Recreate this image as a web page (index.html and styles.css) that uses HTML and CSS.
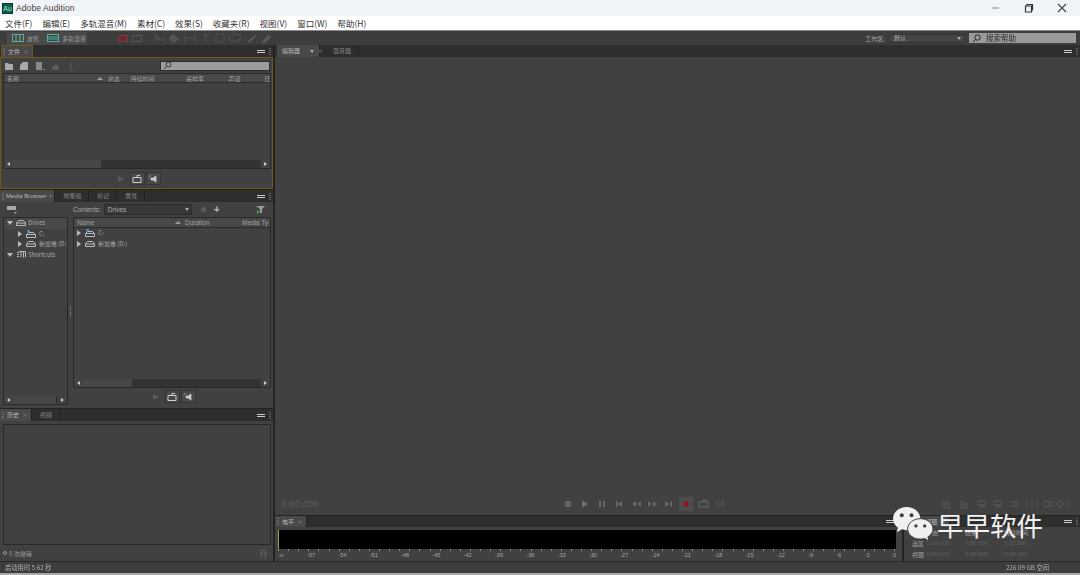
FILE: index.html
```html
<!DOCTYPE html>
<html lang="zh">
<head>
<meta charset="utf-8">
<title>Adobe Audition</title>
<link rel="stylesheet" href="styles.css">
</head>
<body>
<div class="app">
  <header class="titlebar">
    <div class="logo">Au</div>
    <div class="app-name">Adobe Audition</div>
    <div class="winctl">
      <svg width="12" height="12" viewBox="0 0 12 12"><path d="M2 6h7" stroke="#888" fill="none"/></svg>
      <svg width="12" height="12" viewBox="0 0 12 12"><path d="M2.5 4h6v6h-6zM4 4V2.500h5.500V8H8.500" stroke="#333" stroke-width="1.200" fill="none"/></svg>
      <svg width="12" height="12" viewBox="0 0 12 12"><path d="M2 2l8 8M10 2l-8 8" stroke="#444" stroke-width="1.100" fill="none"/></svg>
    </div>
  </header>
  <nav class="menubar">
    <span>文件(F)</span><span>编辑(E)</span><span>多轨混音(M)</span><span>素材(C)</span><span>效果(S)</span><span>收藏夹(R)</span><span>视图(V)</span><span>窗口(W)</span><span>帮助(H)</span>
  </nav>
  <div class="toolbar">
    <div class="mode"><svg width="12" height="8" viewBox="0 0 12 8"><rect x=".5" y=".5" width="11" height="7" fill="none" stroke="#5fae9b"/><path d="M4 1v6M8 1v6" stroke="#5fae9b"/></svg><span>波形</span></div>
    <div class="mode mode-wide"><svg width="12" height="8" viewBox="0 0 12 8"><rect x=".5" y=".5" width="11" height="7" fill="#2c4a42" stroke="#5fae9b"/><path d="M1 3h10M1 5h10" stroke="#5fae9b"/></svg><span>多轨混音</span></div>
    <div class="tools">
      <i class="tool tool-red"></i><i class="tool tool-box"></i>
      <svg class="tool-set" width="120" height="12" viewBox="0 0 120 12" fill="none" stroke="#555">
        <path d="M1 2v7l2-2 3 0zM7 8h3M8.500 6v4"/>
        <path d="M15 6l4-4 5 5-4 4zM24 10h2" fill="#555"/>
        <path d="M31 3v6M41 3v6M32 6h8"/>
        <path d="M49 3h6M52 3v6"/>
        <rect x="62" y="2" width="8" height="8" stroke-dasharray="2 1"/>
        <ellipse cx="81" cy="6" rx="6" ry="3.500" transform="rotate(-15 81 6)"/>
        <path d="M94 10l7-7 1 1-7 7zM108 10l6-7 3 2-6 6z" fill="#555"/>
      </svg>
    </div>
    <div class="workspace">
      <span class="ws-label">工作区:</span>
      <div class="ws-select"><span>默认</span><b class="arrow-d"></b></div>
      <div class="help"><svg width="9" height="9" viewBox="0 0 9 9"><circle cx="5.500" cy="3.500" r="2.700" fill="none" stroke="#222"/><path d="M3.500 5.500L1 8" stroke="#222"/></svg><span>搜索帮助</span></div>
    </div>
  </div>

  <main class="workarea">
    <div class="left">
      <section class="group g-files">
        <div class="tabs">
          <div class="tab tab-active tab-focus"><span class="grip"></span>文件<span class="x">×</span></div>
          <div class="tabs-end"><span class="menu-ic"></span><span class="grip"></span></div>
        </div>
        <div class="panel panel-focus">
          <div class="file-tools">
            <svg width="70" height="10" viewBox="0 0 70 10"><path d="M1 2h3l1 1h4v6H1z" fill="#aaa"/><path d="M16 4l3-3h5v8h-8z" fill="#aaa"/><path d="M32 1h6v8h-6zM39 8h2v1h-2z" fill="#8a8a8a"/><path d="M48 6l4-3 3 3v3h-7z" fill="#5c5c5c"/><path d="M67 2v5M65 9h4" stroke="#5c5c5c"/></svg>
            <div class="search"><svg width="9" height="9" viewBox="0 0 9 9"><circle cx="5.500" cy="3.500" r="2.500" fill="none" stroke="#333"/><path d="M3.500 5.500L1 8" stroke="#333"/></svg></div>
          </div>
          <div class="list list-files">
            <div class="cols">
              <span class="c-name">名称</span><span class="sort"></span><span class="c-s">状态</span><span class="c-d">持续时间</span><span class="c-r">采样率</span><span class="c-c">声道</span><span class="c-e">日</span>
            </div>
            <div class="list-body"></div>
            <div class="hscroll"><b class="sl"></b><i class="thumb thumb-files"></i><b class="sr"></b></div>
          </div>
          <div class="transport-mini">
            <span class="mini mini-off"><b class="play"></b></span>
            <span class="mini"><svg width="10" height="8" viewBox="0 0 10 8"><path d="M1 2.500h8v5H1zM5 2.500V.5h3" fill="none" stroke="#ccc"/></svg></span>
            <span class="mini"><svg width="10" height="8" viewBox="0 0 10 8"><path d="M0 2v1M2 0v2M3 3h2l3-2v6L5 5H3z" stroke="#ccc" fill="#ccc" stroke-width=".7"/></svg></span>
          </div>
        </div>
      </section>

      <section class="group g-media">
        <div class="tabs">
          <div class="tab tab-active tab-media"><span class="grip"></span>Media Browser<span class="x">×</span></div>
          <div class="tab">效果组</div><div class="tab">标记</div><div class="tab">属性</div>
          <div class="tabs-end"><span class="menu-ic"></span><span class="grip"></span></div>
        </div>
        <div class="panel panel-media">
          <div class="media-top">
            <svg class="drives-menu" width="12" height="9" viewBox="0 0 12 9"><path d="M1 1h9v4H1zM8 7h3l-1.500 2z" fill="#aaa"/></svg>
            <span class="contents-label">Contents:</span>
            <div class="contents-sel"><span>Drives</span><b class="arrow-d"></b></div>
            <span class="dim-dot"></span>
            <span class="plus">+</span>
            <svg class="filter" width="10" height="9" viewBox="0 0 10 9"><path d="M0 1h9L6 4v4H4V4z" fill="#999"/><circle cx="2" cy="7" r="1.500" fill="#3a9a3a"/></svg>
          </div>
          <div class="media-split">
            <div class="tree-wrap">
              <div class="tree">
                <div class="trow trow-head"><b class="tw-d"></b><svg class="dr" width="10" height="6" viewBox="0 0 10 6"><path d="M2.500.5h5l2 2.500v2.500H.5V3zM1 3h8" fill="none" stroke="#bbb"/></svg>Drives</div>
                <div class="trow tin"><b class="tw-r"></b><svg class="dr" width="10" height="8" viewBox="0 0 10 8"><path d="M1 0h3v2H1z" fill="#3c8fc0"/><path d="M2.500 2.500h5l2 2v3H.5v-3zM1 4.500h8" fill="none" stroke="#bbb"/></svg>C:</div>
                <div class="trow tin"><b class="tw-r"></b><svg class="dr" width="10" height="6" viewBox="0 0 10 6"><path d="M2.500.5h5l2 2.500v2.500H.5V3zM1 3h8" fill="none" stroke="#bbb"/></svg>新加卷 (D:)</div>
                <div class="trow"><b class="tw-d"></b><svg class="dr" width="10" height="7" viewBox="0 0 10 7"><path d="M3 .5h6.500v6M5 .5v6M7.500.5v6M1 1.500h2M1 3.500h2M1 5.500h2" fill="none" stroke="#bbb"/></svg>Shortcuts</div>
              </div>
              <div class="hscroll"><b class="sl"></b><i class="thumb thumb-tree"></i><b class="sr"></b></div>
            </div>
            <div class="divider"><i></i></div>
            <div class="media-main">
              <div class="list list-media">
                <div class="cols">
                  <span class="m-name">Name</span><span class="sort"></span><span class="m-d">Duration</span><span class="m-t">Media Ty</span>
                </div>
                <div class="list-body">
                  <div class="trow"><b class="tw-r"></b><svg class="dr" width="10" height="8" viewBox="0 0 10 8"><path d="M1 0h3v2H1z" fill="#3c8fc0"/><path d="M2.500 2.500h5l2 2v3H.5v-3zM1 4.500h8" fill="none" stroke="#bbb"/></svg>C:</div>
                  <div class="trow"><b class="tw-r"></b><svg class="dr" width="10" height="6" viewBox="0 0 10 6"><path d="M2.500.5h5l2 2.500v2.500H.5V3zM1 3h8" fill="none" stroke="#bbb"/></svg>新加卷 (D:)</div>
                </div>
                <div class="hscroll"><b class="sl"></b><i class="thumb thumb-media"></i><b class="sr"></b></div>
              </div>
              <div class="transport-mini transport-media">
                <span class="mini mini-off"><b class="play"></b></span>
                <span class="mini"><svg width="10" height="8" viewBox="0 0 10 8"><path d="M1 2.500h8v5H1zM5 2.500V.5h3" fill="none" stroke="#ccc"/></svg></span>
                <span class="mini"><svg width="10" height="8" viewBox="0 0 10 8"><path d="M0 2v1M2 0v2M3 3h2l3-2v6L5 5H3z" stroke="#ccc" fill="#ccc" stroke-width=".7"/></svg></span>
              </div>
            </div>
          </div>
        </div>
      </section>

      <section class="group g-history">
        <div class="tabs">
          <div class="tab tab-active"><span class="grip"></span>历史<span class="x">×</span></div>
          <div class="tab">视频</div>
          <div class="tabs-end"><span class="menu-ic"></span><span class="grip"></span></div>
        </div>
        <div class="panel panel-history">
          <div class="history-box"></div>
          <div class="history-foot"><span class="undo"><i></i>0 次撤销</span><svg width="7" height="9" viewBox="0 0 7 9"><path d="M1 1h5v8H1zM2 3v4M5 3v4" fill="none" stroke="#5e5e5e"/></svg></div>
        </div>
      </section>
    </div>

    <div class="right">
      <section class="group g-editor">
        <div class="tabs">
          <div class="tab tab-active tab-editor"><span class="grip"></span>编辑器<b class="arrow-d"></b><span class="x">×</span></div>
          <div class="tab tab-mix">混音器</div>
          <div class="tabs-end"><span class="menu-ic"></span><span class="grip"></span></div>
        </div>
        <div class="panel panel-editor">
          <div class="canvas"></div>
          <div class="editor-foot">
            <span class="time">0:00.000</span>
            <svg class="transport" width="170" height="14" viewBox="0 0 170 14" fill="#666">
              <rect x="5" y="4" width="6" height="6"/>
              <path d="M22 3.500l6 3.500-6 3.500z" fill="#707070"/>
              <path d="M39 4h2v6h-2zM43 4h2v6h-2z"/>
              <path d="M56 4h1.500v6H56zM62 4v6l-4.500-3z"/>
              <path d="M72 7l4-3v6zM77 7l4-3v6z"/>
              <path d="M88 4l4 3-4 3zM93 4l4 3-4 3z"/>
              <path d="M105 4l4.500 3-4.500 3zM110.500 4h1.500v6h-1.500z"/>
              <rect x="119" y="0" width="14" height="14" fill="#4c4c4c"/>
              <rect x="123.500" y="4.500" width="5" height="5" rx="1" fill="#8a1a22"/>
              <path d="M139 5h9v5h-9zM143 5V3h4" fill="none" stroke="#6a6a6a"/>
              <path d="M156 4v6M158 4h2M158 9h2M161 4l3 5M164 4l-3 5" fill="none" stroke="#5a5a5a"/>
            </svg>
            <svg class="zooms" width="134" height="10" viewBox="0 0 134 10" fill="none" stroke="#5c5c5c"><path d="M2 1v8h7M6 3a2 2 0 1 0 .1 0"/><path d="M19 1v8h7M23 3a2 2 0 1 0 .1 0"/><path d="M36 2h8v4h-8zM38 8h5"/><path d="M52 2h8v4h-8zM54 8h5"/><path d="M69 3h8M69 7h8"/><path d="M86 2l-2 3 2 3M94 2l2 3-2 3M88 5h4"/><path d="M104 2a3 3 0 1 0 .1 0M108 3h4M108 7h4"/><path d="M118 2a3 3 0 1 0 .1 0M123 3l3 2-3 2"/></svg>
          </div>
        </div>
      </section>

      <div class="bottom">
        <section class="group g-levels">
          <div class="tabs tabs-low">
            <div class="tab tab-active"><span class="grip"></span>电平<span class="x">×</span></div>
            <div class="tabs-end"><span class="menu-ic"></span><span class="grip"></span></div>
          </div>
          <div class="panel panel-levels">
            <div class="meter"><i class="peak"></i></div>
            <div class="ticks"></div>
            <div class="scale">
              <span>-∞</span><span>-57</span><span>-54</span><span>-51</span><span>-48</span><span>-45</span><span>-42</span><span>-39</span><span>-36</span><span>-33</span><span>-30</span><span>-27</span><span>-24</span><span>-21</span><span>-18</span><span>-15</span><span>-12</span><span>-9</span><span>-6</span><span>-3</span><span>0</span>
            </div>
          </div>
        </section>
        <section class="group g-sel">
          <div class="tabs tabs-low">
            <div class="tab tab-active tab-sel"><span class="grip"></span>选区/视图<span class="x">×</span></div>
            <div class="tabs-end"><span class="menu-ic"></span><span class="grip"></span></div>
          </div>
          <div class="panel panel-sel">
            <div class="sel-grid">
              <span></span><span class="hd">开始</span><span class="hd">结束</span><span class="hd">持续时间</span>
              <span class="lb">选区</span><span>0:00.000</span><span>0:00.000</span><span>0:00.000</span>
              <span class="lb">视图</span><span>0:00.000</span><span>0:00.000</span><span>0:00.000</span>
            </div>
          </div>
        </section>
      </div>
    </div>

    <div class="watermark">
      <svg width="42" height="37" viewBox="0 0 43 38">
        <path d="M15 1C7 1 1 6.500 1 13c0 3.700 2 7 5 9.200L5 27l5-3c1.500.5 3.200.8 5 .8 8 0 14-5.500 14-11.800S23 1 15 1z" fill="#f0f0f0"/>
        <circle cx="10" cy="9.500" r="2" fill="#3d3d3d"/><circle cx="20" cy="9.500" r="2" fill="#3d3d3d"/>
        <path d="M29 13c-7.200 0-13 4.800-13 10.500S21.800 34 29 34c1.500 0 3-.2 4.300-.7L38 36l-1.200-4.300c3-1.900 5.200-4.900 5.200-8.200C42 17.800 36.200 13 29 13z" fill="#f0f0f0" stroke="#3d3d3d"/>
        <circle cx="24.500" cy="20.500" r="1.700" fill="#3d3d3d"/><circle cx="33.500" cy="20.500" r="1.700" fill="#3d3d3d"/>
      </svg>
      <span>早早软件</span>
    </div>
  </main>

  <footer class="status">
    <span>启动用时 5.62 秒</span>
    <span class="free">226.09 GB 空间</span>
  </footer>
</div>
</body>
</html>
```

FILE: styles.css
```css
* { box-sizing: border-box; }
html, body { margin: 0; height: 100%; overflow: hidden; }
body { background: #414141; font-family: "Noto Sans CJK SC", "Liberation Sans", sans-serif; }
.app { width: 1080px; height: 575px; display: flex; flex-direction: column; filter: blur(.4px); }

.titlebar { height: 16px; flex: none; background: #f0f4f9; display: flex; align-items: center; padding-left: 2px; }
.logo { width: 11px; height: 11px; background: #0e5f50; color: #9fe6cf; font: 7px/10px "Liberation Sans", sans-serif; text-align: center; border: 1px solid #06382f; }
.app-name { margin-left: 3px; font: 8.500px/16px "Liberation Sans", sans-serif; color: #3a3a3a; letter-spacing: .1px; }
.winctl { margin-left: auto; display: flex; gap: 21px; padding-right: 12px; }

.menubar { height: 14px; flex: none; background: #fff; display: flex; padding-left: 5px; font-size: 8.500px; line-height: 14px; color: #333; gap: 10px; white-space: nowrap; }

.toolbar { height: 15px; flex: none; background: #3d3d3d; border-top: 1px solid #888; display: flex; align-items: center; padding-left: 7px; color: #999; font-size: 6px; }
.mode { width: 35px; height: 13px; background: #4a4a4a; display: flex; align-items: center; gap: 3px; padding-left: 5px; }
.mode-wide { width: 45px; }
.tools { display: flex; align-items: center; margin-left: 31px; gap: 4px; }
.tool { width: 10px; height: 7px; display: block; border: 1px solid #555; }
.tool-red { background: #6a2b30; border-color: #7a3b40; }
.tool-set { margin-left: 8px; }
.workspace { margin-left: auto; display: flex; align-items: center; padding-right: 4px; }
.ws-label { margin-right: 4px; color: #aaa; }
.ws-select { width: 76px; height: 9px; background: #454545; border: 1px solid #333; display: flex; align-items: center; justify-content: space-between; padding: 0 3px 0 4px; color: #b0b0b0; line-height: 8px; }
.help { width: 107px; height: 10px; margin-left: 4px; background: #9a9a9a; display: flex; align-items: center; gap: 5px; padding-left: 3px; color: #2a2a2a; font-size: 7.500px; line-height: 10px; }

.workarea { flex: 1; min-height: 0; display: flex; position: relative; gap: 2px; background: #232323; }
.left { width: 273px; flex: none; display: flex; flex-direction: column; gap: 1px; }
.right { flex: 1; min-width: 0; display: flex; flex-direction: column; gap: 1px; }
.group { display: flex; flex-direction: column; min-height: 0; background: #414141; }
.g-files { height: 144px; }
.g-media { height: 218px; }
.g-history { flex: 1; }
.g-editor { flex: 1; }

.tabs { height: 12px; flex: none; background: #2e2e2e; display: flex; align-items: stretch; font-size: 6px; line-height: 12px; color: #858585; white-space: nowrap; }
.tabs-low { height: 11px; }
.tab { padding: 0 7px 0 8px; border-right: 1px solid #222; }
.tab-active { background: #494949; color: #b8b8b8; padding: 0 3px 0 2px; display: flex; align-items: center; gap: 3px; }
.tab-focus { border: 1px solid #6b5a1c; border-bottom: 0; margin-left: 1px; padding: 0 3px 0 1px; }
.tab-media { gap: 2px; padding: 0 2px 0 2px; font: 6px/12px "Liberation Sans", sans-serif; letter-spacing: .05px; }
.tab-editor { width: 43px; margin-left: 2px; }
.tab-editor .arrow-d { margin-left: 7px; }
.tab-mix { padding-left: 13px; }
.grip { width: 2px; height: 7px; background-image: linear-gradient(#888 50%, transparent 50%); background-size: 2px 2px; opacity: .6; display: block; }
.x { color: #888; font-size: 6px; }
.tabs-end { margin-left: auto; display: flex; align-items: center; gap: 4px; padding-right: 2px; }
.menu-ic { width: 8px; height: 3px; border-top: 1px solid #ccc; border-bottom: 1px solid #ccc; display: block; }

.panel { flex: 1; min-height: 0; display: flex; flex-direction: column; background: #414141; }
.panel-focus { border: 1px solid #6b5a1c; padding: 0 1px 0 2px; }
.file-tools { height: 15px; flex: none; display: flex; align-items: center; justify-content: space-between; padding-left: 1px; }
.search { width: 110px; height: 10px; background: #9c9c9c; border: 1px solid #2d2d2d; display: flex; align-items: center; padding-left: 2px; margin-right: 1px; }

.list { display: flex; flex-direction: column; border: 1px solid #292929; color: #a0a0a0; font-size: 6px; min-width: 0; }
.list-files { height: 96px; flex: none; }
.cols { height: 9px; flex: none; background: #484848; border-bottom: 1px solid #2b2b2b; display: flex; align-items: center; line-height: 9px; color: #a0a0a0; white-space: nowrap; overflow: hidden; }
.c-name { margin-left: 3px; width: 91px; }
.sort { width: 0; height: 0; border: 3px solid transparent; border-top: 0; border-bottom: 3px solid #999; display: block; flex: none; }
.c-s { margin-left: 5px; width: 23px; }
.c-d { width: 56px; }
.c-r { width: 43px; }
.c-c { width: 36px; }
.list-body { flex: 1; min-height: 0; }
.hscroll { height: 8px; flex: none; background: #333; display: flex; align-items: center; }
.sl, .sr { width: 9px; height: 8px; display: block; position: relative; background: #434343; }
.sl::after, .sr::after { content: ""; position: absolute; top: 2px; left: 3px; border: 2px solid transparent; }
.sl::after { border-right: 3px solid #ccc; border-left: 0; }
.sr::after { border-left: 3px solid #ccc; border-right: 0; }
.thumb { height: 8px; display: block; background: #474747; }
.thumb-files { width: 88px; }
.thumb-tree { width: 43px; }
.thumb-media { width: 49px; }
.hscroll .sr { margin-left: auto; }

.transport-mini { flex: 1; display: flex; align-items: center; justify-content: center; gap: 1px; }
.mini { width: 15px; height: 13px; display: flex; align-items: center; justify-content: center; background: #484848; border: 1px solid #353535; }
.mini-off { background: none; border-color: transparent; }
.play { width: 0; height: 0; border: 3px solid transparent; border-left: 6px solid #5a5a5a; border-right: 0; display: block; }

.panel-media { padding: 0 2px 0 3px; }
.media-top { height: 15px; flex: none; display: flex; align-items: center; color: #aaa; font: 6.500px/15px "Liberation Sans", sans-serif; }
.drives-menu { margin-left: 3px; }
.contents-label { margin-left: 55px; }
.contents-sel { width: 88px; height: 11px; margin-left: 3px; background: #383838; border: 1px solid #2b2b2b; display: flex; align-items: center; justify-content: space-between; padding: 0 2px 0 3px; line-height: 9px; color: #aaa; }
.dim-dot { width: 5px; height: 5px; border-radius: 50%; background: #5c5c5c; margin-left: 9px; }
.plus { margin-left: 8px; font: bold 10px/10px "Liberation Sans", sans-serif; color: #bbb; }
.filter { margin-left: auto; margin-right: 5px; }
.media-split { flex: 1; min-height: 0; display: flex; padding-bottom: 3px; }
.tree-wrap { width: 65px; flex: none; display: flex; flex-direction: column; border: 1px solid #292929; }
.tree { flex: 1; min-height: 0; overflow: hidden; }
.trow { height: 10.500px; display: flex; align-items: center; font: 6px/10px "Noto Sans CJK SC", sans-serif; color: #a8a8a8; white-space: nowrap; padding-left: 3px; overflow: hidden; }
.trow-head { background: #484848; }
.tin { padding-left: 14px; }
.dr { margin-right: 3px; flex: none; }
.tree .trow:not(.tin) .dr { margin-right: 2px; }
.tree .trow:not(.tin) .tw-d { margin-right: 3px; }
.tw-d { width: 0; height: 0; border: 3px solid transparent; border-top: 4px solid #bbb; border-bottom: 0; margin-right: 4px; display: block; flex: none; }
.tw-r { width: 0; height: 0; border: 3px solid transparent; border-left: 4px solid #bbb; border-right: 0; margin-right: 4px; display: block; flex: none; }
.divider { width: 5px; flex: none; display: flex; align-items: center; justify-content: center; }
.divider i { width: 1px; height: 11px; background-image: linear-gradient(#888 50%, transparent 50%); background-size: 1px 2px; display: block; }
.media-main { flex: 1; min-width: 0; display: flex; flex-direction: column; }
.list-media { height: 171px; flex: none; }
.list-media .cols { height: 10px; font: 6.500px/10px "Liberation Sans", sans-serif; }
.list-media .trow { padding-left: 3px; }
.m-name { margin-left: 3px; width: 98px; }
.m-d { margin-left: 4px; width: 57px; }

.panel-history { padding: 3px 2px 0 3px; }
.history-box { height: 121px; flex: none; border: 1px solid #292929; }
.history-foot { flex: 1; display: flex; align-items: center; justify-content: space-between; padding: 0 4px 0 0; font-size: 6px; color: #9a9a9a; }
.undo { display: flex; align-items: center; gap: 2px; }
.undo i { width: 4px; height: 4px; border: 1px solid #999; border-radius: 50%; display: block; }

.editor-foot { height: 21px; flex: none; display: flex; align-items: center; padding: 0 4px 2px 7px; }
.canvas { flex: 1; }
.time { font: 9px/12px "Liberation Sans", sans-serif; color: #5f5f5f; width: 278px; letter-spacing: .2px; }
.zooms { margin-left: auto; }

.bottom { height: 45px; flex: none; display: flex; gap: 2px; }
.g-levels { width: 627px; flex: none; }
.g-sel { flex: 1; }
.panel-levels { padding: 3px 6px 0 3px; }
.meter { height: 19px; flex: none; background: #000; position: relative; }
.peak { position: absolute; left: 0; top: 0; width: 1px; height: 19px; background: #8ea53a; display: block; }
.ticks { height: 2px; flex: none; background-image: repeating-linear-gradient(90deg, #8a8a8a 0 1px, transparent 1px 10.100px); }
.scale { height: 9px; display: flex; justify-content: space-between; font: 5.500px/9px "Liberation Sans", sans-serif; color: #a8a8a8; }
.panel-sel { padding: 0 0 0 8px; }
.sel-grid { display: grid; grid-template-columns: 14px 39px 39px 39px; grid-auto-rows: 11px; font: 6px/11px "Liberation Sans", sans-serif; color: #5f5f5f; }
.sel-grid .hd, .sel-grid .lb { color: #a0a0a0; font-family: "Noto Sans CJK SC", sans-serif; }

.arrow-d { width: 0; height: 0; border: 2.500px solid transparent; border-top: 3px solid #aaa; border-bottom: 0; display: block; }

.watermark { position: absolute; left: 892px; top: 461px; display: flex; align-items: center; gap: 3px; color: #f2f2f2; font-size: 26.500px; line-height: 32px; }

.status { height: 14px; flex: none; background: #3d3d3d; border-top: 1px solid #262626; border-bottom: 2px solid #aaa; display: flex; justify-content: space-between; align-items: center; padding: 0 31px 0 5px; font-size: 6.300px; color: #b0b0b0; line-height: 11px; }
```
